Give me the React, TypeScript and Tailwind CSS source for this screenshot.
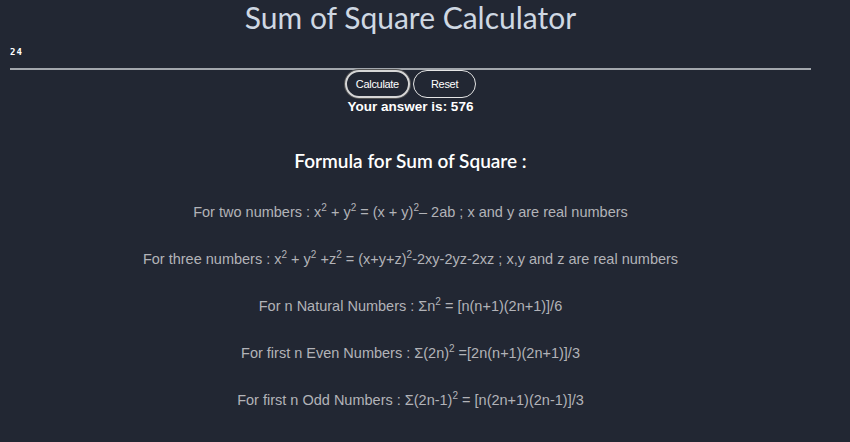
import React from "react";

export default function App() {
  const lines: React.ReactNode[] = [
    <>For two numbers : x<sup>2</sup> + y<sup>2</sup> = (x + y)<sup>2</sup>– 2ab ; x and y are real numbers</>,
    <>For three numbers : x<sup>2</sup> + y<sup>2</sup> +z<sup>2</sup> = (x+y+z)<sup>2</sup>-2xy-2yz-2xz ; x,y and z are real numbers</>,
    <>For n Natural Numbers : Σn<sup>2</sup> = [n(n+1)(2n+1)]/6</>,
    <>For first n Even Numbers : Σ(2n)<sup>2</sup> =[2n(n+1)(2n+1)]/3</>,
    <>For first n Odd Numbers : Σ(2n-1)<sup>2</sup> = [n(2n+1)(2n-1)]/3</>,
  ];
  return (
    <div className="min-h-[442px] w-full bg-[#222733]" style={{ fontFamily: '"Liberation Sans", Arial, sans-serif' }}>
      <div className="w-[821px] flex flex-col items-center">
        <h1 className="text-[30px] leading-[34px] text-[#cfd8e3]" style={{ fontFamily: 'Lato, "Liberation Sans", sans-serif' }}>
          Sum of Square Calculator
        </h1>
        <div className="w-full px-[10px] mt-[12px]">
          <div className="text-[9px] font-bold text-white tracking-[1px] h-[12px] leading-[12px]" style={{ fontFamily: '"DejaVu Sans Mono", monospace' }}>24</div>
          <div className="h-[2px] bg-[#a3a7ad] mt-[10px]" />
        </div>
        <div className="flex gap-[3px]">
          <button className="h-[28px] px-[9px] rounded-full border-2 border-[#d6d6d6] text-white text-[11px] tracking-[-0.3px] shadow-[0_0_0_1px_#555]">Calculate</button>
          <button className="h-[28px] px-[17px] rounded-full border border-[#e5e5e5] text-white text-[11px] tracking-[-0.3px]">Reset</button>
        </div>
        <div className="text-white font-bold text-[13.5px] leading-[16px] mt-[1px]">Your answer is: 576</div>
        <div className="text-white text-[19px] font-semibold leading-[22px] mt-[35px]" style={{ fontFamily: 'Lato, "Liberation Sans", sans-serif' }}>Formula for Sum of Square :</div>
        <div className="flex flex-col items-center mt-[31px] gap-[28px]">
          {lines.map((l, i) => (
            <p key={i} className="text-[#b2b3b8] text-[14.5px] leading-[19px] [&_sup]:text-[10px] [&_sup]:top-[-6px]">{l}</p>
          ))}
        </div>
      </div>
    </div>
  );
}
